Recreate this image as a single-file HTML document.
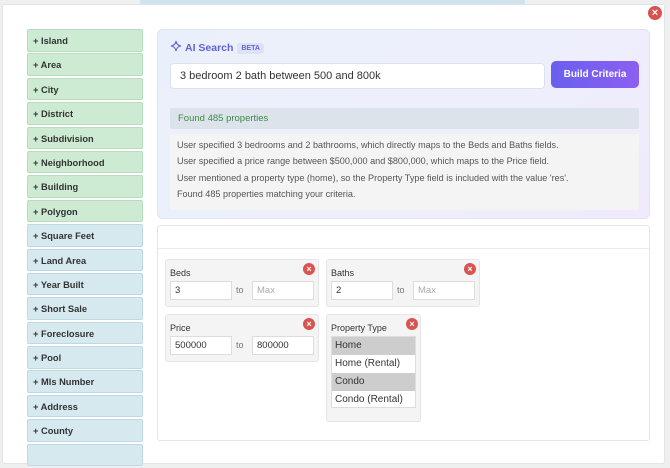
<!DOCTYPE html>
<html><head><meta charset="utf-8"><style>
*{box-sizing:border-box;margin:0;padding:0}
body{width:670px;height:448px;overflow:hidden;background:#eef0f0;font-family:"Liberation Sans",Arial,sans-serif;position:relative}
.topbar{position:absolute;left:140px;top:0;width:385px;height:5px;background:#cfe4ee}
.modal{position:absolute;left:2px;top:4px;width:663px;height:460px;background:#fff;border:1px solid #e4e4e4;border-radius:3px}
.close{position:absolute;left:648px;top:6px;width:14px;height:14px;border-radius:50%;background:#d9534f;color:#fff;font-size:11px;line-height:14px;text-align:center;font-weight:bold}
.side{position:absolute;left:27px;top:29px;width:116px}
.side div{height:22.5px;margin-bottom:1.9px;border-radius:2px;font-size:9.3px;font-weight:bold;color:#333;padding-left:5px;line-height:23px}
.g{background:#cdebd2;border:1px solid #b9dcc0}
.b{background:#d5e9ef;border:1px solid #bfd9e2}
.ai{position:absolute;left:157px;top:29px;width:493px;height:190px;border-radius:6px;border:1px solid #dfe3f2;background:linear-gradient(135deg,#eaf0fb,#eeeffc 60%,#f0eafc)}
.ai .t{position:absolute;left:12px;top:10px;font-size:10.5px;font-weight:bold;color:#6062d8}
.beta{display:inline-block;background:#dde2f8;color:#6468d0;font-size:7px;padding:2px 4px;border-radius:3px;margin-left:4px;vertical-align:1px}
.inp{position:absolute;left:12px;top:33px;width:375px;height:26px;background:#fff;border:1px solid #dde2ea;border-radius:4px;font-size:11px;color:#333;padding-left:9px;line-height:25px}
.btn{position:absolute;left:393px;top:31px;width:88px;height:27px;border-radius:5px;background:linear-gradient(90deg,#6a5ff0,#8c5ff0);color:#fff;font-size:10px;font-weight:bold;text-align:center;line-height:28px}
.found{position:absolute;left:12px;top:78px;width:469px;height:21px;background:#dde3ea;color:#3e8a48;font-size:9.5px;line-height:21px;padding-left:8px;border-radius:2px}
.exp{position:absolute;left:12px;top:104px;width:469px;height:76px;background:#f4f4f5;color:#555;font-size:9.1px;line-height:16.3px;padding:3px 0 0 7px}
.crit{position:absolute;left:157px;top:225px;width:493px;height:216px;border:1px solid #e6e6e6;border-radius:3px}
.crit .h{height:23px;border-bottom:1px solid #eaeaea}
.f{position:absolute;background:#f4f4f4;border:1px solid #e5e5e5;border-radius:3px}
.f .l{position:absolute;left:4px;top:8px;font-size:9px;color:#333}
.x{position:absolute;width:12px;height:12px;border-radius:50%;background:#d9534f;color:#fff;font-size:9px;line-height:12px;text-align:center;font-weight:bold}
.box{position:absolute;top:21px;width:62px;height:19px;background:#fff;border:1px solid #ddd;font-size:9.5px;line-height:18px;padding-left:4px;color:#333}
.to{position:absolute;top:25px;left:70px;font-size:9px;color:#777}
.sel{position:absolute;left:4px;top:21px;width:85px;height:72px;background:#fff;border:1px solid #ddd;overflow:hidden}
.sel div{height:18px;font-size:10px;line-height:18px;padding-left:3px;color:#333}
.sel .s{background:#cdcdcd}
</style></head><body>
<div class="topbar"></div>
<div class="modal"></div>
<div class="close">×</div>
<div class="side">
<div class="g">+ Island</div><div class="g">+ Area</div><div class="g">+ City</div><div class="g">+ District</div><div class="g">+ Subdivision</div><div class="g">+ Neighborhood</div><div class="g">+ Building</div><div class="g">+ Polygon</div>
<div class="b">+ Square Feet</div><div class="b">+ Land Area</div><div class="b">+ Year Built</div><div class="b">+ Short Sale</div><div class="b">+ Foreclosure</div><div class="b">+ Pool</div><div class="b">+ Mls Number</div><div class="b">+ Address</div><div class="b">+ County</div><div class="b"></div>
</div>
<div class="ai">
<div class="t"><svg width="12" height="12" viewBox="0 0 12 12" style="vertical-align:-1px;margin-right:3px"><path d="M6 1 Q6.6 5.4 11 6 Q6.6 6.6 6 11 Q5.4 6.6 1 6 Q5.4 5.4 6 1Z" fill="none" stroke="#6062d8" stroke-width="1.1"/></svg>AI Search<span class="beta">BETA</span></div>
<div class="inp">3 bedroom 2 bath between 500 and 800k</div>
<div class="btn">Build Criteria</div>
<div class="found">Found 485 properties</div>
<div class="exp">User specified 3 bedrooms and 2 bathrooms, which directly maps to the Beds and Baths fields.<br>User specified a price range between $500,000 and $800,000, which maps to the Price field.<br>User mentioned a property type (home), so the Property Type field is included with the value 'res'.<br>Found 485 properties matching your criteria.</div>
</div>
<div class="crit"><div class="h"></div></div>
<div class="f" style="left:165px;top:259px;width:154px;height:48px"><div class="l">Beds</div><div class="x" style="left:137px;top:3px">×</div><div class="box" style="left:4px">3</div><div class="to">to</div><div class="box" style="left:86px;color:#aaa">Max</div></div>
<div class="f" style="left:326px;top:259px;width:154px;height:48px"><div class="l">Baths</div><div class="x" style="left:137px;top:3px">×</div><div class="box" style="left:4px">2</div><div class="to">to</div><div class="box" style="left:86px;color:#aaa">Max</div></div>
<div class="f" style="left:165px;top:314px;width:154px;height:48px"><div class="l">Price</div><div class="x" style="left:137px;top:3px">×</div><div class="box" style="left:4px">500000</div><div class="to">to</div><div class="box" style="left:86px">800000</div></div>
<div class="f" style="left:326px;top:314px;width:95px;height:108px"><div class="l">Property Type</div><div class="x" style="left:79px;top:3px">×</div>
<div class="sel"><div class="s">Home</div><div>Home (Rental)</div><div class="s">Condo</div><div>Condo (Rental)</div></div></div>
</body></html>
